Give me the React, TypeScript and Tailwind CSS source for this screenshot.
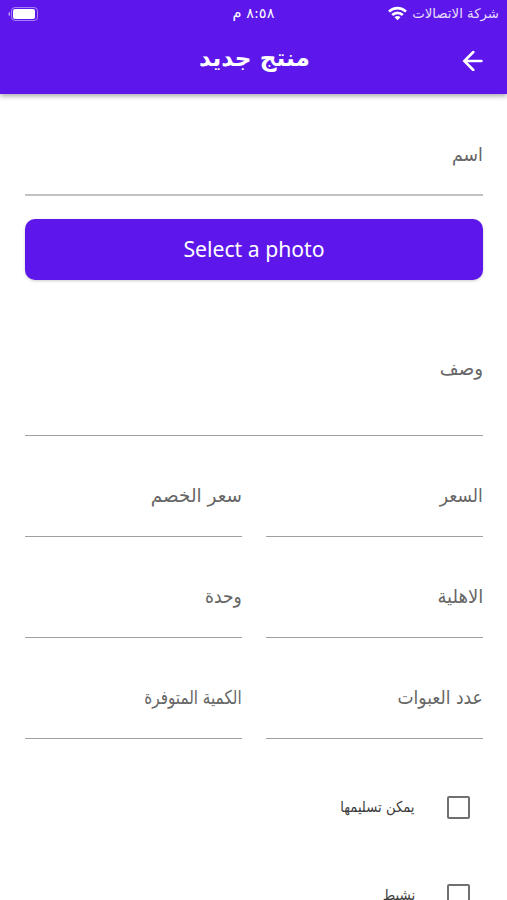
import clsx from 'clsx'

type FieldProps = {
  label: string
  className?: string
  labelClass?: string
}

function Field({ label, className, labelClass }: FieldProps) {
  return (
    <label className={clsx('flex flex-col text-[#666666]', className)}>
      <span className={clsx('block w-max origin-right whitespace-nowrap text-[19px] leading-6', labelClass)}>{label}</span>
    </label>
  )
}

function CheckRow({ label, labelClass }: { label: string; labelClass?: string }) {
  return (
    <label className="flex h-[88px] shrink-0 items-start pr-[13px]">
      <span className="mt-0.5 size-[23px] shrink-0 rounded-[2px] border-2 border-[#707070]" />
      <span className={clsx('mr-8 origin-right whitespace-nowrap text-[15px] leading-[26px] text-[#3c3c3c]', labelClass)}>{label}</span>
    </label>
  )
}

function StatusBar() {
  return (
    <div className="grid h-[27px] grid-cols-3 items-center px-2 leading-none">
      <div className="flex items-center gap-[5px]">
        <span className="whitespace-nowrap text-[13.3px] opacity-85">شركة الاتصالات</span>
        <svg width="19" height="15" viewBox="0 0 19 15" fill="none" stroke="currentColor" strokeWidth="2.6">
          <path d="M1 5.6C5.8 .9 13.2 .9 18 5.6" />
          <path d="M4.2 9c3-2.9 7.6-2.9 10.6 0" />
          <path d="M6.5 11.3 9.5 14.3l3-3c-1.6-1.6-4.4-1.6-6 0Z" fill="currentColor" stroke="none" />
        </svg>
      </div>
      <span className="text-center text-[14.5px]">٨:٥٨ م</span>
      <svg className="mr-auto" width="30" height="14" viewBox="0 0 30 14">
        <rect x="3.5" y=".5" width="26" height="13" rx="3.5" fill="none" stroke="#fff" strokeOpacity=".45" />
        <rect x="5" y="2" width="22" height="10" rx="2" fill="#fff" />
        <path d="M2 5v4C-.2 8.5 -.2 5.5 2 5Z" fill="#fff" fillOpacity=".55" />
      </svg>
    </div>
  )
}

export default function App() {
  return (
    <div
      dir="rtl"
      className="flex h-[900px] w-[507px] flex-col overflow-hidden bg-white font-['DejaVu_Sans',sans-serif]"
    >
      <header className="h-[94px] shrink-0 bg-[#5e17eb] text-white shadow-[0_2px_5px_rgba(0,0,0,0.35)]">
        <StatusBar />
        <div className="grid h-[67px] grid-cols-[60px_1fr_60px] items-center">
          <svg className="mr-6 size-[21px]" viewBox="0 0 21 21" fill="none" stroke="currentColor" strokeWidth="2.5" strokeLinecap="round">
            <path d="M19.5 11H3M11.3 2 2.3 11l9 9" />
          </svg>
          <h1 className="pb-1 pl-0.5 text-center text-[23.3px] font-bold">منتج جديد</h1>
        </div>
      </header>

      <main className="flex flex-col pr-6 pl-[25px]">
        <Field label="اسم" className="h-[102px] border-b-2 border-[#c2c2c2] pt-[48px]" labelClass="scale-x-[0.91]" />

        <button className="mt-[23px] h-[61px] shrink-0 rounded-[10px] bg-[#5e17eb] pb-px font-['Noto_Sans',sans-serif] text-[21.2px] text-white shadow-[0_1px_3px_rgba(0,0,0,0.2)]">
          Select a photo
        </button>

        <Field label="وصف" className="h-[156px] border-b border-[#a0a0a0] pt-[76px]" labelClass="scale-x-[0.96]" />

        <div className="grid grid-cols-2 gap-x-6 [&>label]:h-[101px] [&>label]:border-b [&>label]:border-[#a0a0a0] [&>label]:pt-[47px]">
          <Field label="السعر" labelClass="scale-x-[0.9]" />
          <Field label="سعر الخصم" labelClass="scale-x-[0.97]" />
          <Field label="الاهلية" labelClass="scale-x-[0.95]" />
          <Field label="وحدة" labelClass="scale-x-[0.9]" />
          <Field label="عدد العبوات" labelClass="scale-x-[0.9]" />
          <Field label="الكمية المتوفرة" labelClass="scale-x-[0.8]" />
        </div>

        <div className="mt-[55px] flex flex-col">
          <CheckRow label="يمكن تسليمها" labelClass="scale-x-[0.88]" />
          <CheckRow label="نشيط" labelClass="scale-x-[0.9]" />
        </div>
      </main>
    </div>
  )
}
